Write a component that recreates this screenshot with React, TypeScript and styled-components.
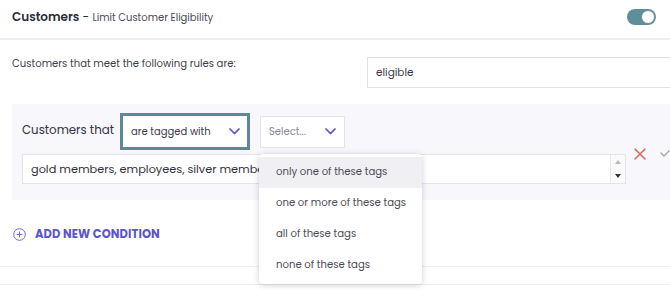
import React from 'react';
import styled, { createGlobalStyle } from 'styled-components';

const GlobalStyle = createGlobalStyle`
  html, body {
    margin: 0;
    padding: 0;
    background: #ffffff;
    overflow: hidden;
  }
  body {
    font-family: 'Poppins', 'Inter', 'Noto Sans', sans-serif;
    color: #3a3a47;
  }
`;

const Page = styled.div`
  width: 670px;
  height: 290px;
  position: relative;
  overflow: hidden;
`;

const Header = styled.div`
  height: 38px;
  display: flex;
  align-items: center;
  justify-content: space-between;
  padding: 0 14px 0 12px;
  border-bottom: 2px solid #eeedf6;
`;

const Title = styled.div`
  font-size: 12px;
  color: #2c2c3a;
  margin-top: -4px;

  b {
    font-weight: 600;
  }

  span {
    font-size: 10px;
    color: #4a4a55;
  }
`;

const Toggle = styled.div`
  width: 29px;
  height: 16px;
  border-radius: 8px;
  background: #5d8f9b;
  position: relative;
  margin-top: -4px;

  &::after {
    content: '';
    position: absolute;
    right: 1px;
    top: 1px;
    width: 12px;
    height: 12px;
    border-radius: 50%;
    background: #ffffff;
    border: 1px solid #7c8a90;
  }
`;

const RulesRow = styled.div`
  display: flex;
  align-items: flex-start;
  height: 64px;
  padding-left: 12px;
`;

const RulesLabel = styled.div`
  font-size: 10.1px;
  color: #3e3e4a;
  width: 355px;
  padding-top: 16px;
`;

const TextBox = styled.div`
  margin-top: 17px;
  flex: 1;
  height: 31px;
  border: 1px solid #e1e1e8;
  border-right: none;
  box-sizing: border-box;
  display: flex;
  align-items: center;
  padding-left: 8px;
  font-size: 10.5px;
  color: #3a3a47;
`;

const ConditionPanel = styled.div`
  margin-left: 12px;
  height: 96px;
  background: #f7f7fc;
  padding: 9px 0 0 10px;
  box-sizing: border-box;
`;

const ConditionRow = styled.div`
  display: flex;
  align-items: center;
  gap: 10px;
`;

const RowLabel = styled.div`
  font-size: 11.8px;
  color: #33333f;
  width: 88px;
  white-space: nowrap;
  margin-top: -2px;
`;

const SelectWrap = styled.div`
  position: relative;
`;

const SelectBox = styled.div<{ $focused?: boolean; $w: number }>`
  width: ${(p) => p.$w}px;
  height: ${(p) => (p.$focused ? 37 : 32)}px;
  box-sizing: border-box;
  background: #ffffff;
  border: ${(p) => (p.$focused ? '3px solid #5d8898' : '1px solid #e3e3ea')};
  display: flex;
  align-items: center;
  justify-content: space-between;
  padding: 0 ${(p) => (p.$focused ? 7 : 8)}px 0 8px;
  font-size: 10px;
  color: ${(p) => (p.$focused ? '#3a3a47' : '#8a8a95')};
`;

const Chevron = () => (
  <svg width="11" height="7" viewBox="0 0 11 7">
    <path d="M1 1l4.5 4.5L10 1" fill="none" stroke="#5a52c8" strokeWidth="1.7" strokeLinecap="round" strokeLinejoin="round" />
  </svg>
);

const Menu = styled.div`
  position: absolute;
  top: 38px;
  left: -1px;
  width: 163px;
  background: #ffffff;
  border-radius: 4px;
  box-shadow: 0 1px 6px rgba(40, 40, 70, 0.22);
  padding: 3px 0;
  z-index: 5;
`;

const MenuItem = styled.div<{ $active?: boolean }>`
  height: 31px;
  display: flex;
  align-items: center;
  padding-left: 17px;
  font-size: 10.1px;
  color: #4a4a55;
  background: ${(p) => (p.$active ? '#f0f0f4' : 'transparent')};
`;

const TagsRow = styled.div`
  display: flex;
  align-items: flex-start;
  margin-top: 4px;
`;

const TagsInput = styled.div`
  width: 610px;
  height: 30px;
  box-sizing: border-box;
  background: #ffffff;
  border: 1px solid #e3e3ea;
  display: flex;
  align-items: center;
  justify-content: space-between;
  padding-left: 8px;
  font-size: 11.3px;
  color: #2f2f3b;
`;

const Spinner = styled.div`
  width: 14px;
  height: 28px;
  border-left: 1px solid #e6e6ec;
  display: flex;
  flex-direction: column;
  align-items: center;
  justify-content: space-around;
  background: #fafafa;
`;

const Arrow = styled.div<{ $up?: boolean; $dark?: boolean }>`
  width: 0;
  height: 0;
  border-left: 3.5px solid transparent;
  border-right: 3.5px solid transparent;
  ${(p) => (p.$up ? 'border-bottom' : 'border-top')}: 4px solid ${(p) => (p.$dark ? '#333' : '#b8b8be')};
`;

const Actions = styled.div`
  display: flex;
  align-items: center;
  gap: 14px;
  margin-left: 8px;
  margin-top: -6px;
`;

const AddRow = styled.div`
  display: flex;
  align-items: center;
  gap: 9px;
  padding: 28px 0 0 13px;
  height: 12px;
`;

const AddText = styled.div`
  font-size: 11.5px;
  font-weight: 700;
  color: #5b54cc;
  letter-spacing: 0.1px;
`;

const Lines = styled.div`
  margin-top: 26px;
  height: 17px;
  border-top: 1px solid #ececf2;
  border-bottom: 1px solid #ececf2;
`;

const App: React.FC = () => {
  return (
    <Page>
      <GlobalStyle />
      <Header>
        <Title>
          <b>Customers</b> - <span>Limit Customer Eligibility</span>
        </Title>
        <Toggle />
      </Header>
      <RulesRow>
        <RulesLabel>Customers that meet the following rules are:</RulesLabel>
        <TextBox>eligible</TextBox>
      </RulesRow>
      <ConditionPanel>
        <ConditionRow>
          <RowLabel>Customers that</RowLabel>
          <SelectBox $focused $w={130}>
            are tagged with
            <Chevron />
          </SelectBox>
          <SelectWrap>
            <SelectBox $w={85}>
              Select...
              <Chevron />
            </SelectBox>
            <Menu>
              <MenuItem $active>only one of these tags</MenuItem>
              <MenuItem>one or more of these tags</MenuItem>
              <MenuItem>all of these tags</MenuItem>
              <MenuItem>none of these tags</MenuItem>
            </Menu>
          </SelectWrap>
        </ConditionRow>
        <TagsRow>
          <TagsInput>
            gold members, employees, silver members
            <Spinner>
              <Arrow $up />
              <Arrow $dark />
            </Spinner>
          </TagsInput>
          <Actions>
            <svg width="12" height="12" viewBox="0 0 12 12">
              <path d="M1 1l10 10M11 1L1 11" stroke="#d9645a" strokeWidth="1.5" strokeLinecap="round" />
            </svg>
            <svg width="10" height="8" viewBox="0 0 10 8">
              <path d="M1 3l3 3 5-5" fill="none" stroke="#9aa7b0" strokeWidth="1.3" strokeLinecap="round" />
            </svg>
          </Actions>
        </TagsRow>
      </ConditionPanel>
      <AddRow>
        <svg width="13" height="13" viewBox="0 0 13 13">
          <circle cx="6.5" cy="6.5" r="5.8" fill="none" stroke="#6f68d2" strokeWidth="1" />
          <path d="M6.5 4v5M4 6.5h5" stroke="#6f68d2" strokeWidth="1" strokeLinecap="round" />
        </svg>
        <AddText>ADD NEW CONDITION</AddText>
      </AddRow>
      <Lines />
    </Page>
  );
};

export default App;
